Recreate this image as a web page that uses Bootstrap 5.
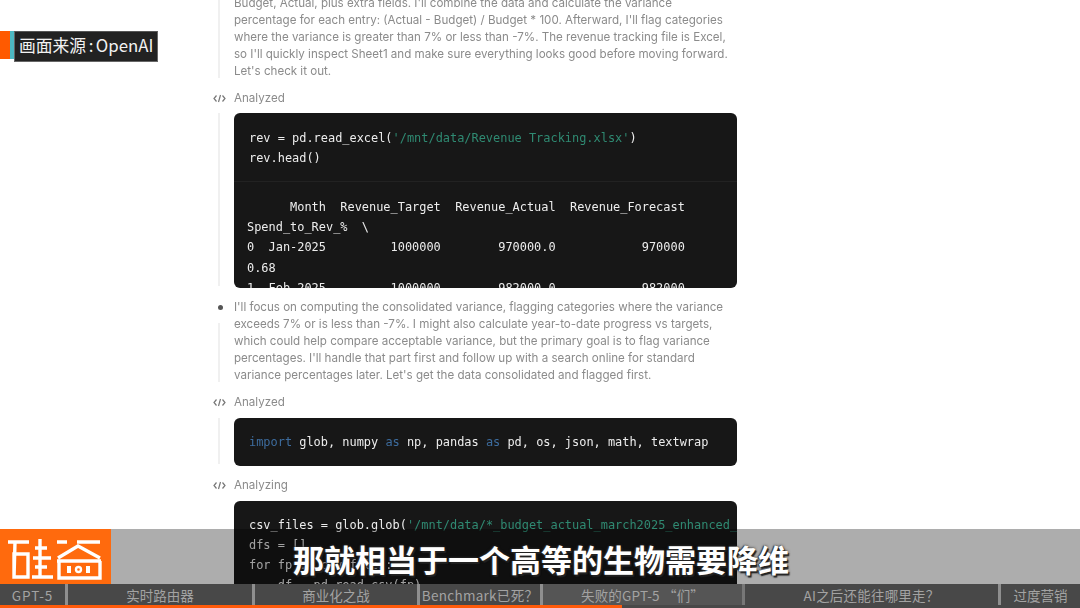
<!DOCTYPE html>
<html lang="zh">
<head>
<meta charset="utf-8">
<title>GPT-5</title>
<link href="https://cdn.jsdelivr.net/npm/bootstrap@5.3.0/dist/css/bootstrap.min.css" rel="stylesheet">
<style>
html,body{width:1080px;height:608px;overflow:hidden;background:#fff}
.stage{position:relative;width:1080px;height:608px;overflow:hidden;background:#fff}
.feed{width:523px;margin-left:214px;margin-top:-5.5px;filter:blur(.35px)}
.gutter{width:20px;flex:none;position:relative}
.rail{position:absolute;left:4px;top:0;bottom:2px;width:2px;background:#f0f0f0}
.rail-b{top:24px}
.prose{font:11.58px/17px Inter,"Liberation Sans",sans-serif;color:#8b8b8b;white-space:nowrap;width:503px}
.step{font:11.58px/17px Inter,"Liberation Sans",sans-serif;color:#8b8b8b;margin-top:10px;margin-bottom:7px}
.step-first{margin-bottom:6px}
.step-last{margin-top:11px}
.step svg{display:block;width:13px;height:9px;margin-left:-1px}
.codebox{width:503px;background:#171717;border-radius:6px;overflow:hidden;font:11.93px/20.2px "DejaVu Sans Mono",monospace;color:#ededed}
.codein{padding:14px 15px;white-space:pre}
.codein.nudged{padding-top:15px;padding-bottom:13px}
.codeout{padding:15px 13px;border-top:1px solid #222;white-space:pre}
.tall{height:175px}
.s{color:#2f8a72}
.k{color:#3d6c9e}
.dot{width:5px;height:5px;border-radius:50%;background:#555;position:absolute;left:3.5px;top:6px}
.after-code{margin-top:11px}
.srcwrap{position:absolute;left:0;top:31px}
.srcor{width:10px;height:28px;background:#ff5a00}
.srcte{width:4px;height:28px;background:#4db9c2}
.srclab{height:31px;width:144px;background:#222;border:1px solid #666;border-top-color:#555;color:#f2f2f2;font:16.8px/27px "Noto Sans CJK SC",sans-serif;padding-left:4px;white-space:nowrap}
.colon{margin:0 2.5px}
.lower{position:absolute;left:0;right:0;bottom:0}
.band{height:55px;background:rgba(0,0,0,.32)}
.brand{width:111px;height:55px;background:#ff6a0d;flex:none}
.brand svg{display:block}
.sub{position:absolute;left:293px;top:540px;font:700 31px/38px "Noto Sans CJK SC",sans-serif;color:#fff;white-space:nowrap;text-shadow:1.5px 1.5px 1px #222,-1px 0 1px #333,0 0 3px #333}
.tabs{height:24px;background:#484848;position:relative}
.tabi{height:21px;font:13.5px/22px "Noto Sans CJK SC","Liberation Sans",sans-serif;color:#a3a3a3;border-right:3px solid #8f8f8f;text-align:center;white-space:nowrap;background:#484848}
.tabi.lit{background:#555;border-right-color:#777}
.tabi.lastone{border-right:0}
.prog{position:absolute;left:0;bottom:0;width:622px;height:3px;background:#ff5a0a}
.t1{width:68px;letter-spacing:1px}.t2{width:187px}.t3{width:165px}.t4{width:123px;letter-spacing:.3px}.t5{width:202px;letter-spacing:.2px}.t6{width:256px;letter-spacing:.2px}.t7{width:79px}
</style>
</head>
<body>
<div class="stage">
  <div class="feed d-flex flex-column">
    <div class="d-flex">
      <div class="gutter"><div class="rail"></div></div>
      <div class="prose">Budget, Actual, plus extra fields. I'll combine the data and calculate the variance<br>percentage for each entry: (Actual - Budget) / Budget * 100. Afterward, I'll flag categories<br>where the variance is greater than 7% or less than -7%. The revenue tracking file is Excel,<br>so I'll quickly inspect Sheet1 and make sure everything looks good before moving forward.<br>Let's check it out.</div>
    </div>
    <div class="d-flex align-items-center step step-first">
      <div class="gutter"><svg viewBox="0 0 13 9" fill="none" stroke="#777" stroke-width="1.2"><path d="M3.500 1.500 1 4.500l2.500 3M9.500 1.500 12 4.500l-2.500 3M7.500 1 5.500 8"/></svg></div>
      <div>Analyzed</div>
    </div>
    <div class="d-flex">
      <div class="gutter"><div class="rail"></div></div>
      <div class="codebox tall">
        <div class="codein nudged">rev = pd.read_excel(<span class="s">'/mnt/data/Revenue Tracking.xlsx'</span>)
rev.head()</div>
        <div class="codeout">      Month  Revenue_Target  Revenue_Actual  Revenue_Forecast
Spend_to_Rev_%  \
0  Jan-2025         1000000        970000.0            970000
0.68
1  Feb-2025         1000000        982000.0            982000</div>
      </div>
    </div>
    <div class="d-flex after-code">
      <div class="gutter"><div class="dot"></div><div class="rail rail-b"></div></div>
      <div class="prose">I'll focus on computing the consolidated variance, flagging categories where the variance<br>exceeds 7% or is less than -7%. I might also calculate year-to-date progress vs targets,<br>which could help compare acceptable variance, but the primary goal is to flag variance<br>percentages. I'll handle that part first and follow up with a search online for standard<br>variance percentages later. Let's get the data consolidated and flagged first.</div>
    </div>
    <div class="d-flex align-items-center step">
      <div class="gutter"><svg viewBox="0 0 13 9" fill="none" stroke="#777" stroke-width="1.2"><path d="M3.500 1.500 1 4.500l2.500 3M9.500 1.500 12 4.500l-2.500 3M7.500 1 5.500 8"/></svg></div>
      <div>Analyzed</div>
    </div>
    <div class="d-flex">
      <div class="gutter"><div class="rail"></div></div>
      <div class="codebox"><div class="codein"><span class="k">import</span> glob, numpy <span class="k">as</span> np, pandas <span class="k">as</span> pd, os, json, math, textwrap</div></div>
    </div>
    <div class="d-flex align-items-center step step-last">
      <div class="gutter"><svg viewBox="0 0 13 9" fill="none" stroke="#777" stroke-width="1.2"><path d="M3.500 1.500 1 4.500l2.500 3M9.500 1.500 12 4.500l-2.500 3M7.500 1 5.500 8"/></svg></div>
      <div>Analyzing</div>
    </div>
    <div class="d-flex">
      <div class="gutter"></div>
      <div class="codebox"><div class="codein">csv_files = glob.glob(<span class="s">'/mnt/data/*_budget_actual_march2025_enhanced_</span>
dfs = []
for fp in csv_files:
    df = pd.read_csv(fp)</div></div>
    </div>
  </div>

  <div class="srcwrap d-flex align-items-start">
    <div class="srcor"></div><div class="srcte"></div>
    <div class="srclab">画面来源<span class="colon">:</span>OpenAI</div>
  </div>

  <div class="lower d-flex flex-column">
    <div class="d-flex">
      <div class="brand">
        <svg width="111" height="55" viewBox="0 0 111 55" fill="none" stroke="#fff" stroke-width="3.400">
          <path d="M8 13h21M15 13l-1 36M14 25h14v23H14zM35 19h12M33 29h18M35 38h12M32 48h21M40 10v38"/>
          <path d="M57 13h10M77 13h23M58 29 78 17l22 12M57 32h44M59 32v17h41V32"/>
          <path d="M69 37v7M88 37v7" stroke-width="4"/>
          <circle cx="78.500" cy="40.500" r="2.500" stroke-width="2.400"/>
        </svg>
      </div>
      <div class="band flex-grow-1"></div>
    </div>
    <div class="tabs d-flex">
      <div class="tabi t1">GPT-5</div>
      <div class="tabi t2">实时路由器</div>
      <div class="tabi t3">商业化之战</div>
      <div class="tabi t4">Benchmark已死？</div>
      <div class="tabi t5 lit">失败的GPT-5 “们”</div>
      <div class="tabi t6">AI之后还能往哪里走？</div>
      <div class="tabi t7 lastone">过度营销</div>
      <div class="prog"></div>
    </div>
  </div>
  <div class="sub">那就相当于一个高等的生物需要降维</div>
</div>
<script src="https://cdn.jsdelivr.net/npm/bootstrap@5.3.0/dist/js/bootstrap.bundle.min.js"></script>
</body>
</html>
